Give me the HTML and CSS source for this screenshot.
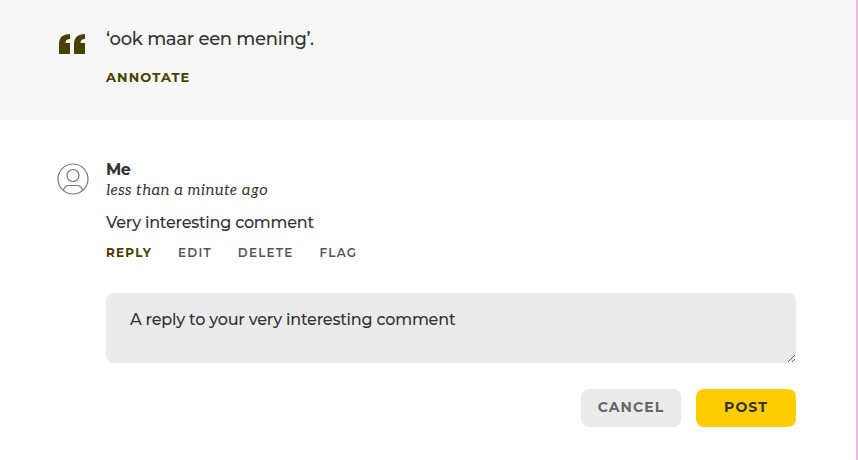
FILE: index.html
```html
<!DOCTYPE html>
<html lang="en">
<head>
    <meta charset="UTF-8">
    <meta name="viewport" content="width=device-width, initial-scale=1.0">
    <title>Comments</title>
    <link rel="stylesheet" href="styles.css">
</head>
<body>
    <!-- Quoted text -->
    <section class="quote">
        <svg class="quote-icon" width="26" height="20" viewBox="0 0 26 20">
            <path d="M0 20V10C0 3.500 4 0 11 0V5C8 5 6.500 6.500 6.500 9H11V20Z"/>
            <path d="M15 20V10C15 3.500 19 0 26 0V5C23 5 21.500 6.500 21.500 9H26V20Z"/>
        </svg>
        <div class="quote-body">
            <p class="quote-text">‘ook maar een mening’.</p>
            <a class="annotate">ANNOTATE</a>
        </div>
    </section>

    <!-- Comment -->
    <section class="comment">
        <svg class="avatar" width="32" height="32" viewBox="0 0 32 32">
            <circle cx="16" cy="16" r="15"/>
            <circle cx="16" cy="12.500" r="6"/>
            <path d="M6.500 27.500C7 24.500 8.500 22.500 12 22.500H20C23.500 22.500 25 24.500 25.500 27.500"/>
        </svg>
        <div class="comment-body">
            <div class="author">Me</div>
            <div class="time">less than a minute ago</div>
            <p class="comment-text">Very interesting comment</p>
            <nav class="actions">
                <a class="reply">REPLY</a>
                <a class="edit">EDIT</a>
                <a class="delete">DELETE</a>
                <a class="flag">FLAG</a>
            </nav>
            <form class="reply-form">
                <textarea spellcheck="false">A reply to your very interesting comment</textarea>
                <div class="buttons">
                    <button type="button" class="cancel">CANCEL</button>
                    <button type="button" class="post">POST</button>
                </div>
            </form>
        </div>
    </section>
</body>
</html>
```
FILE: styles.css
```css
* {
    box-sizing: border-box;
}
body {
    margin: 0;
    height: 460px;
    overflow: hidden;
    border-right: 2px solid #ebb9de;
    background: #fff;
    color: #333;
    font-family: Montserrat, Inter, sans-serif;
    font-weight: 500;
}
p {
    margin: 0;
}

/* Quote */
.quote {
    display: flex;
    height: 120px;
    padding: 26px 60px 0 59px;
    background: #f7f7f7;
}
.quote-icon {
    margin: 8px 21px 0 0;
    fill: #4a4000;
}
.quote-text {
    height: 26px;
    line-height: 26px;
    font-size: 18px;
    letter-spacing: -0.3px;
}
.annotate {
    display: block;
    margin-top: 15px;
    line-height: 20px;
    font-size: 13px;
    font-weight: 700;
    letter-spacing: 1.1px;
    color: #4a4000;
}

/* Comment */
.comment {
    display: flex;
    padding: 40px 60px 0 57px;
}
.avatar {
    flex: none;
    margin: 3px 17px 0 0;
    fill: none;
    stroke: #777;
    stroke-width: 1.2;
}
.comment-body {
    flex: 1;
}
.author {
    line-height: 20px;
    font-size: 16px;
    font-weight: 700;
    letter-spacing: -0.5px;
}
.time {
    line-height: 20px;
    font-family: Aleo, "DejaVu Serif Condensed", "DejaVu Serif", serif;
    font-size: 15px;
    font-weight: 400;
    font-style: italic;
    letter-spacing: 0.4px;
}
.comment-text {
    margin-top: 11px;
    line-height: 24px;
    font-size: 16px;
    letter-spacing: -0.23px;
}
.actions {
    display: flex;
    gap: 26px;
    margin-top: 8px;
    line-height: 20px;
    font-size: 12px;
    font-weight: 600;
    letter-spacing: 1.2px;
    color: #555;
}
.reply {
    font-weight: 700;
    color: #4a4000;
}

/* Reply form */
.reply-form textarea {
    display: block;
    width: 690px;
    height: 70px;
    margin-top: 30px;
    padding: 15px 24px 13px;
    border: none;
    border-radius: 8px;
    outline: none;
    background: #ebebeb;
    color: #333;
    font: inherit;
    font-size: 16px;
    line-height: 24px;
    letter-spacing: -0.21px;
    resize: vertical;
}
.buttons {
    display: flex;
    justify-content: flex-end;
    gap: 15px;
    width: 690px;
    margin-top: 26px;
}
.buttons button {
    width: 100px;
    height: 38px;
    padding: 0 0 2px;
    border: none;
    border-radius: 8px;
    font-family: inherit;
    font-size: 14px;
    font-weight: 700;
    letter-spacing: 1.1px;
}
.cancel {
    background: #ebebeb;
    color: #666;
}
.post {
    background: #ffcd00;
    color: #333;
}
```
